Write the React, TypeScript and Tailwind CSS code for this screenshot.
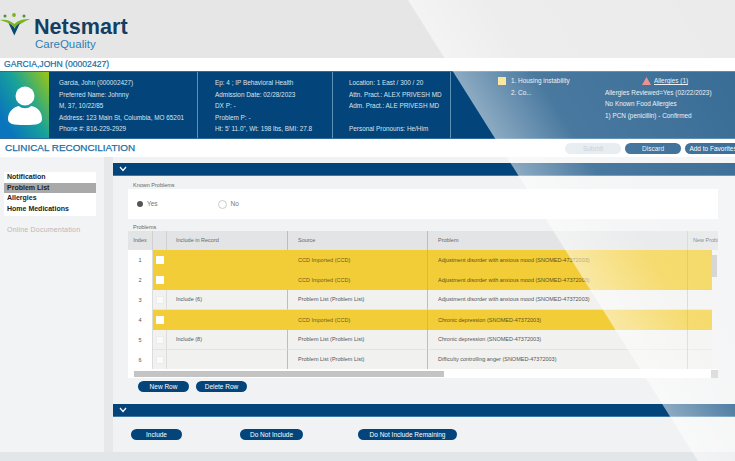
const rows = [
  { index: "1", include: "", source: "CCD Imported (CCD)", problem: "Adjustment disorder with anxious mood (SNOMED-47372003)", flagged: true },
  { index: "2", include: "", source: "CCD Imported (CCD)", problem: "Adjustment disorder with anxious mood (SNOMED-47372003)", flagged: true },
  { index: "3", include: "Include (6)", source: "Problem List (Problem List)", problem: "Adjustment disorder with anxious mood (SNOMED-47372003)", flagged: false },
  { index: "4", include: "", source: "CCD Imported (CCD)", problem: "Chronic depression (SNOMED-47372003)", flagged: true },
  { index: "5", include: "Include (8)", source: "Problem List (Problem List)", problem: "Chronic depression (SNOMED-47372003)", flagged: false },
  { index: "6", include: "", source: "Problem List (Problem List)", problem: "Difficulty controlling anger (SNOMED-47372003)", flagged: false },
];

const gridCols = "grid grid-cols-[25px_14px_121px_139px_260px_31px]";

function Logo() {
  return (
    <div className="flex items-start">
      <svg width="32" height="24" viewBox="0 0 32 24" className="mt-[13px] shrink-0">
        <circle cx="5" cy="3" r="1.5" fill="#4f8f3a" />
        <circle cx="14" cy="2" r="1.9" fill="#7ab51d" />
        <circle cx="24" cy="3" r="1.5" fill="#4f8f3a" />
        <path d="M0 7 C5 6 10 7 14.5 11 C18 7 24 6 30 6 C24 9 19 11 15 15 C12 11 6 9 0 7Z" fill="#7ab51d" />
        <path d="M8.5 10 L14.3 22.5 L20 10 C17.5 11.5 15.8 13 14.8 15.5 C13.5 13 11.5 11.5 8.5 10Z" fill="#0b4a6f" />
      </svg>
      <div className="ml-[2px] flex flex-col">
        <span className="text-[21.6px] leading-[20px] font-bold text-[#123f62] mt-[17px]">Netsmart</span>
        <span className="text-[11.5px] leading-[12px] text-[#2f7fb5] mt-[1px] ml-[1px]">CareQuality</span>
      </div>
    </div>
  );
}

function Avatar() {
  return (
    <div className="w-[49px] shrink-0 flex items-center justify-center bg-[linear-gradient(60deg,#0a74bd_15%,#17a29a_55%,#8fc31f_95%)]">
      <svg width="36" height="42" viewBox="0 0 36 42">
        <circle cx="18" cy="12" r="9.5" fill="#fff" />
        <path d="M1 35 C1 27 7 23 12 22 C15 25 21 25 24 22 C30 23 35 27 35 35 C35 40 30 41 18 41 C6 41 1 40 1 35Z" fill="#fff" />
      </svg>
    </div>
  );
}

function PillButton({ label, className }: { label: string; className: string }) {
  return (
    <button className={`h-[11px] shrink-0 rounded-full bg-[#03457a] text-white text-[6.5px] leading-[11px] text-center ${className}`}>
      {label}
    </button>
  );
}

function SectionBar() {
  return (
    <div className="h-[13px] bg-[#03457a] flex items-center pl-[6px] border-b border-[#3f79a3]">
      <svg width="8" height="6" viewBox="0 0 8 6">
        <path d="M1 1 L4 4.5 L7 1" fill="none" stroke="#fff" strokeWidth="1.2" />
      </svg>
    </div>
  );
}

function ProblemsTable() {
  return (
    <div className="relative h-[147px] w-[590px] bg-white overflow-hidden">
      <div className={`${gridCols} h-[19px] bg-[#e3e4e5] text-[5.5px] text-[#666]`}>
        <div className="flex items-center justify-center border-r border-[#d0d0d0]">Index</div>
        <div className="border-r border-[#d0d0d0]" />
        <div className="flex items-center pl-[9px] border-r border-[#bdbdbd]">Include in Record</div>
        <div className="flex items-center pl-[10px]">Source</div>
        <div className="flex items-center pl-[10px] border-l border-[#bdbdbd]">Problem</div>
        <div className="flex items-center pl-[5px] border-l border-[#cfcfcf] whitespace-nowrap overflow-hidden">New Problem</div>
      </div>
      {rows.map((row) => (
        <div key={row.index} className={`${gridCols} h-[20px] text-[5.5px] text-[#555]`}>
          <div className="flex items-center justify-center bg-white border-r border-[#dcdcdc]">{row.index}</div>
          <div className={`flex items-center justify-center ${row.flagged ? "bg-[#f2cd38]" : "bg-[#f1f1f0] border-r border-[#dcdcdc] border-b border-b-[#e4e4e4]"}`}>
            <span className={`w-[8px] h-[8px] ${row.flagged ? "bg-white" : "bg-[#fafafa] border border-[#ececec]"}`} />
          </div>
          <div className={`flex items-center pl-[9px] border-r ${row.flagged ? "bg-[#f2cd38] border-transparent" : "bg-[#f1f1f0] border-[#bdbdbd] border-b border-b-[#e4e4e4]"}`}>
            {row.include}
          </div>
          <div className={`flex items-center pl-[10px] whitespace-nowrap ${row.flagged ? "bg-[#f2cd38] text-[#6d5d1a]" : "bg-[#f1f1f0] border-b border-[#e4e4e4]"}`}>
            {row.source}
          </div>
          <div className={`flex items-center pl-[10px] border-l whitespace-nowrap ${row.flagged ? "bg-[#f2cd38] text-[#5f5217] border-[#dcb92f]" : "bg-[#f1f1f0] border-[#bdbdbd] border-b border-b-[#e4e4e4]"}`}>
            {row.problem}
          </div>
          <div className={`flex border-l ${row.flagged ? "border-[#dcb92f]" : "border-[#cfcfcf]"}`}>
            <div className={`w-[24px] ${row.flagged ? "bg-[#f2cd38]" : "bg-[#f1f1f0] border-b border-[#e4e4e4]"}`} />
            <div className="flex-1 bg-[#f2f2f2]" />
          </div>
        </div>
      ))}
      <div className="absolute right-[1px] top-[24px] w-[5px] h-[22px] bg-[#c9c9c9]" />
      <div className="absolute left-0 right-0 bottom-0 h-[9px] bg-white flex items-center pl-[6px]">
        <div className="w-[310px] h-[6px] bg-[#c4c4c4]" />
      </div>
      <div className="absolute right-0 bottom-0 w-[7px] h-[8px] bg-[#cfcfcf]" />
    </div>
  );
}

export default function App() {
  return (
    <div className="relative w-[735px] h-[461px] overflow-hidden bg-[#e3e6e8] font-['Liberation_Sans',Arial,sans-serif]">
      <header className="h-[58px] bg-[#e6e6e6]">
        <Logo />
      </header>

      <div className="h-[13px] bg-white flex items-center pl-[4px] text-[8.6px] text-[#1c6ea4] [-webkit-text-stroke:0.2px_#1c6ea4]">
        GARCIA,JOHN (00002427)
      </div>

      <section className="h-[68px] bg-[#03457a] flex text-[6.4px] text-[#d8e4ee] border-y border-[#2f6c9a]">
        <Avatar />
        <div className="w-[149px] border-r border-[#5d90b5] pl-[10px] pt-[5px] leading-[11.6px]">
          <div>Garcia, John (000002427)</div>
          <div>Preferred Name: Johnny</div>
          <div>M, 37, 10/22/85</div>
          <div>Address: 123 Main St, Columbia, MO 65201</div>
          <div>Phone #: 816-229-2929</div>
        </div>
        <div className="w-[135px] border-r border-[#5d90b5] pl-[17px] pt-[5px] leading-[11.6px]">
          <div>Ep: 4 ; IP Behavioral Health</div>
          <div>Admission Date: 02/28/2023</div>
          <div>DX P: -</div>
          <div>Problem P: -</div>
          <div>Ht: 5' 11.0", Wt: 198 lbs, BMI: 27.8</div>
        </div>
        <div className="w-[118px] border-r border-[#5d90b5] pl-[16px] pt-[5px] leading-[11.6px]">
          <div>Location: 1 East / 300 / 20</div>
          <div>Attn. Pract.: ALEX PRIVESH MD</div>
          <div>Adm. Pract.: ALE PRIVESH MD</div>
          <div>&nbsp;</div>
          <div>Personal Pronouns: He/Him</div>
        </div>
        <div className="w-[60px] shrink-0 pl-[47px] pt-[5px]">
          <div className="w-[8px] h-[8px] bg-[#f6d860]" />
        </div>
        <div className="w-[66px] pt-[3px] leading-[11.6px] text-[#e4edf3] whitespace-nowrap">
          <div>1. Housing instability</div>
          <div>2. Co...</div>
        </div>
        <div className="flex-1 pl-[28px] pt-[3px] leading-[11.6px] text-[#e4edf3] whitespace-nowrap">
          <div className="flex items-center gap-[3px] pl-[37px]">
            <svg width="9" height="8" viewBox="0 0 9 8">
              <path d="M4.5 0 L9 8 L0 8Z" fill="#e8706a" />
            </svg>
            <span className="underline">Allergies (1)</span>
          </div>
          <div>Allergies Reviewed=Yes (02/22/2023)</div>
          <div>No Known Food Allergies</div>
          <div>1) PCN (penicillin) - Confirmed</div>
        </div>
      </section>

      <div className="h-[18px] bg-white flex items-center pl-[5px] overflow-hidden">
        <h1 className="text-[9.9px] text-[#1c6ea4] whitespace-nowrap [-webkit-text-stroke:0.25px_#1c6ea4]">CLINICAL RECONCILIATION</h1>
        <div className="ml-[430px] flex gap-[4px] shrink-0">
          <PillButton label="Submit" className="w-[56px] !bg-[#dfe6ec] !text-[#b4c0ca]" />
          <PillButton label="Discard" className="w-[56px] !text-[#e5edf3]" />
          <PillButton label="Add to Favorites" className="w-[56px] whitespace-nowrap" />
        </div>
      </div>

      <div className="h-[295px] flex bg-[#e6e8e9]">
        <aside className="w-[104px] bg-[#f2f3f4] pt-[15px] pl-[4px] pr-[8px]">
          <nav className="bg-white text-[7px] leading-[10.5px] font-bold text-[#222]">
            <div className="pl-[3px]">Notification</div>
            <div className="pl-[3px] bg-[#a9a9a9]">Problem List</div>
            <div className="pl-[3px]">Allergies</div>
            <div className="pl-[3px] pb-[2px]">Home Medications</div>
          </nav>
          <div className="mt-[9px] pl-[3px] text-[7px] tracking-[0.2px] text-[#b8b8b8]">Online Documentation</div>
        </aside>

        <main className="ml-[9px] flex-1 bg-[#f1f2f3] flex flex-col">
          <div className="mt-[6px]">
            <SectionBar />
          </div>
          <div className="pl-[15px]">
            <div className="h-[13px] pl-[5px] flex items-end text-[5.5px] text-[#666]">Known Problems</div>
            <div className="w-[590px] h-[30px] bg-white flex items-center text-[6.5px] text-[#777]">
              <span className="ml-[9px] w-[6px] h-[6px] rounded-full bg-[#555]" />
              <span className="ml-[4px]">Yes</span>
              <span className="ml-[60px] w-[9px] h-[9px] rounded-full border border-[#ccc] bg-white" />
              <span className="ml-[4px]">No</span>
            </div>
            <div className="h-[12px] pl-[5px] flex items-end text-[5.5px] text-[#666]">Problems</div>
            <ProblemsTable />
            <div className="flex gap-[7px] pl-[10px] mt-[3px]">
              <PillButton label="New Row" className="w-[51px]" />
              <PillButton label="Delete Row" className="w-[51px]" />
            </div>
          </div>
          <div className="mt-[12px]">
            <SectionBar />
          </div>
          <div className="flex pl-[18px] mt-[12px]">
            <PillButton label="Include" className="w-[51px]" />
            <PillButton label="Do Not Include" className="ml-[58px] w-[63px]" />
            <PillButton label="Do Not Include Remaining" className="ml-[55px] w-[99px]" />
          </div>
        </main>
      </div>

      <div className="pointer-events-none absolute inset-0 [clip-path:polygon(408px_0,735px_0,735px_461px,698px_461px)] bg-[linear-gradient(58deg,rgba(255,255,255,0.55)_68%,rgba(255,255,255,0.28)_76%,rgba(255,255,255,0.2)_100%)]" />
    </div>
  );
}
